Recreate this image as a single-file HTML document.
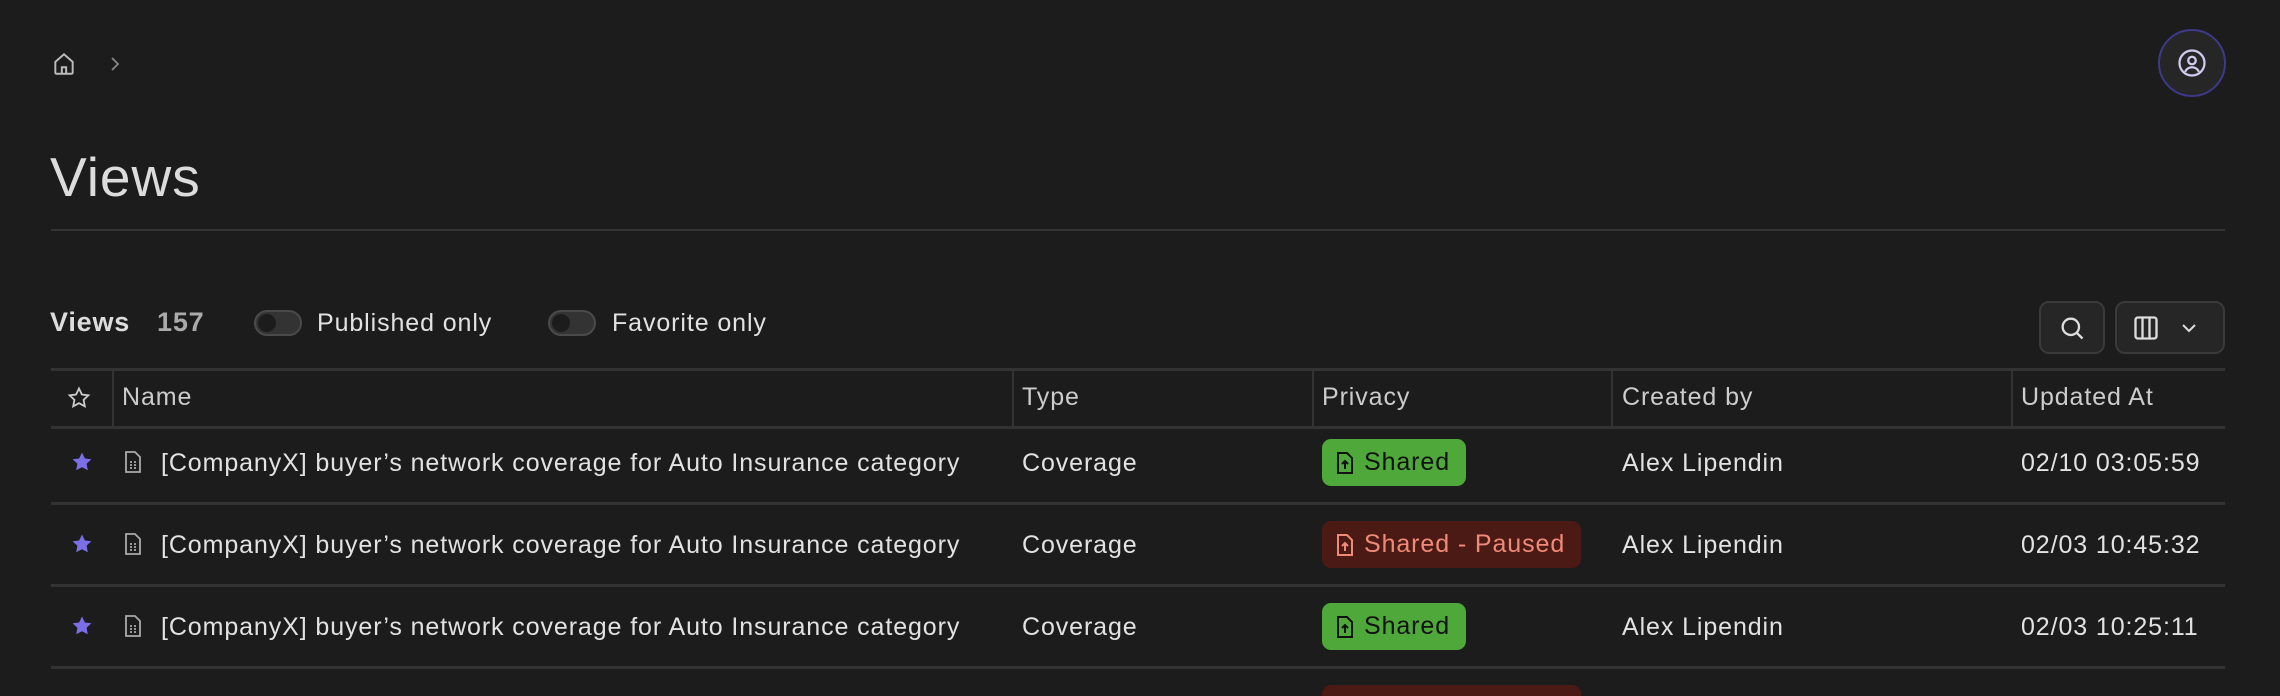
<!DOCTYPE html>
<html style="width:2280px;height:696px;overflow:hidden"><head><meta charset="utf-8"><style>
*{box-sizing:border-box;margin:0;padding:0}
body{width:2280px;height:696px;background:#1c1c1c;color:#e2e2e2;font-family:"Liberation Sans",sans-serif;position:relative;overflow:hidden}
.a{position:absolute}
.t{font-size:25px;white-space:nowrap;letter-spacing:0.9px}
.hl{position:absolute;height:3px;background:#333}
.vl{position:absolute;width:2px;background:#333;top:370px;height:57px}
.badge{position:absolute;height:47px;border-radius:9px;font-size:25px;letter-spacing:0.9px;display:flex;align-items:center;padding-left:14px;gap:10px;white-space:nowrap}
.g{background:#4ea83a;color:#111;width:144px}
.r{background:#4c1a14;color:#f08a78;width:259px}
.tog{position:absolute;width:48px;height:26px;border-radius:13px;background:#333;border:2px solid #4a4a4a}
.tog:after{content:"";position:absolute;left:2px;top:2px;width:18px;height:18px;border-radius:50%;background:#1c1c1c}
.btn{position:absolute;top:301px;height:53px;border:2px solid #3a3a3a;background:#262626;border-radius:10px}
</style></head><body>
<svg class="a" style="left:51px;top:51px" width="26" height="26" viewBox="0 0 24 24" fill="none" stroke="#bbb" stroke-width="1.8"><path d="M4 10l8-7 8 7v10a1 1 0 0 1-1 1H5a1 1 0 0 1-1-1z"/><path d="M10 21v-6h4v6"/></svg>
<svg class="a" style="left:107px;top:54px" width="16" height="20" viewBox="0 0 16 20" fill="none" stroke="#888" stroke-width="1.8"><path d="M5 4l6 6-6 6"/></svg>
<div class="a" style="left:2158px;top:29px;width:68px;height:68px;border-radius:50%;border:2px solid #3d3a8a;background:#262626"></div>
<svg class="a" style="left:2177px;top:48px" width="30" height="30" viewBox="0 0 24 24" fill="none" stroke="#d0ccf0" stroke-width="1.8"><circle cx="12" cy="12" r="10"/><circle cx="12" cy="10" r="3"/><path d="M6.5 19a6 6 0 0 1 11 0"/></svg>
<div class="a" style="left:50px;top:145px;font-size:55px;letter-spacing:1px;color:#dcdcdc">Views</div>
<div class="hl" style="left:51px;width:2174px;top:229px;height:2px"></div>
<div class="a" style="left:50px;top:307px;font-size:27px;letter-spacing:0.8px;font-weight:bold;color:#ddd">Views</div>
<div class="a" style="left:157px;top:307px;font-size:27px;letter-spacing:0.8px;font-weight:bold;color:#aaa">157</div>
<div class="tog" style="left:254px;top:310px"></div>
<div class="a t" style="left:317px;top:309px">Published only</div>
<div class="tog" style="left:548px;top:310px"></div>
<div class="a t" style="left:612px;top:309px">Favorite only</div>
<div class="btn" style="left:2039px;width:66px"></div>
<svg class="a" style="left:2058px;top:314px" width="28" height="28" viewBox="0 0 24 24" fill="none" stroke="#ddd" stroke-width="2"><circle cx="11" cy="11" r="7"/><path d="M16 16l5 5"/></svg>
<div class="btn" style="left:2115px;width:110px"></div>
<svg class="a" style="left:2132px;top:314px" width="28" height="28" viewBox="0 0 24 24" fill="none" stroke="#ddd" stroke-width="2"><rect x="3" y="3" width="18" height="18" rx="2"/><path d="M9 3v18M15 3v18"/></svg>
<svg class="a" style="left:2180px;top:320px" width="18" height="16" viewBox="0 0 18 16" fill="none" stroke="#ddd" stroke-width="2"><path d="M3 5l6 6 6-6"/></svg>
<div class="hl" style="left:51px;width:2174px;top:368px"></div>
<div class="hl" style="left:51px;width:2174px;top:426px"></div>
<div class="vl" style="left:112px"></div><div class="vl" style="left:1012px"></div><div class="vl" style="left:1312px"></div><div class="vl" style="left:1611px"></div><div class="vl" style="left:2011px"></div>
<svg class="a" style="left:67px;top:386px" width="24" height="24" viewBox="0 0 24 24" fill="none" stroke="#ccc" stroke-width="1.8"><path d="M12 2.5l2.9 6 6.5.8-4.8 4.5 1.2 6.5L12 17.2l-5.8 3.1 1.2-6.5-4.8-4.5 6.5-.8z"/></svg>
<div class="a t" style="left:122px;top:383px;color:#ccc">Name</div>
<div class="a t" style="left:1022px;top:383px;color:#ccc">Type</div>
<div class="a t" style="left:1322px;top:383px;color:#ccc">Privacy</div>
<div class="a t" style="left:1622px;top:383px;color:#ccc">Created by</div>
<div class="a t" style="left:2021px;top:383px;color:#ccc">Updated At</div>

<div class="hl" style="left:51px;width:2174px;top:502px"></div>
<div class="hl" style="left:51px;width:2174px;top:584px"></div>
<div class="hl" style="left:51px;width:2174px;top:666px"></div>

<svg class="a" style="left:70px;top:450px" width="24" height="24" viewBox="0 0 24 24" fill="#7b6ee6"><path d="M12 2.5l2.9 6 6.5.8-4.8 4.5 1.2 6.5L12 17.2l-5.8 3.1 1.2-6.5-4.8-4.5 6.5-.8z"/></svg>
<svg class="a" style="left:123px;top:450px" width="20" height="24" viewBox="0 0 20 24" fill="none" stroke="#aaa" stroke-width="1.8"><path d="M3 2h9l5 5v15H3z"/><path d="M7 12h2M11 12h2M7 15h2M11 15h2M7 18h2M11 18h2"/></svg>
<div class="a t" style="left:161px;top:449px">[CompanyX] buyer’s network coverage for Auto Insurance category</div>
<div class="a t" style="left:1022px;top:449px">Coverage</div>
<div class="badge g" style="left:1322px;top:439px"><svg width="18" height="24" viewBox="0 0 18 24" fill="none" stroke="#111" stroke-width="2"><path d="M2 2h9l5 5v15H2z"/><path d="M9 18v-8M6 13l3-3 3 3"/></svg>Shared</div>
<div class="a t" style="left:1622px;top:449px">Alex Lipendin</div>
<div class="a t" style="left:2021px;top:449px">02/10 03:05:59</div>

<svg class="a" style="left:70px;top:532px" width="24" height="24" viewBox="0 0 24 24" fill="#7b6ee6"><path d="M12 2.5l2.9 6 6.5.8-4.8 4.5 1.2 6.5L12 17.2l-5.8 3.1 1.2-6.5-4.8-4.5 6.5-.8z"/></svg>
<svg class="a" style="left:123px;top:532px" width="20" height="24" viewBox="0 0 20 24" fill="none" stroke="#aaa" stroke-width="1.8"><path d="M3 2h9l5 5v15H3z"/><path d="M7 12h2M11 12h2M7 15h2M11 15h2M7 18h2M11 18h2"/></svg>
<div class="a t" style="left:161px;top:531px">[CompanyX] buyer’s network coverage for Auto Insurance category</div>
<div class="a t" style="left:1022px;top:531px">Coverage</div>
<div class="badge r" style="left:1322px;top:521px"><svg width="18" height="24" viewBox="0 0 18 24" fill="none" stroke="#f08a78" stroke-width="2"><path d="M2 2h9l5 5v15H2z"/><path d="M9 18v-8M6 13l3-3 3 3"/></svg>Shared - Paused</div>
<div class="a t" style="left:1622px;top:531px">Alex Lipendin</div>
<div class="a t" style="left:2021px;top:531px">02/03 10:45:32</div>

<svg class="a" style="left:70px;top:614px" width="24" height="24" viewBox="0 0 24 24" fill="#7b6ee6"><path d="M12 2.5l2.9 6 6.5.8-4.8 4.5 1.2 6.5L12 17.2l-5.8 3.1 1.2-6.5-4.8-4.5 6.5-.8z"/></svg>
<svg class="a" style="left:123px;top:614px" width="20" height="24" viewBox="0 0 20 24" fill="none" stroke="#aaa" stroke-width="1.8"><path d="M3 2h9l5 5v15H3z"/><path d="M7 12h2M11 12h2M7 15h2M11 15h2M7 18h2M11 18h2"/></svg>
<div class="a t" style="left:161px;top:613px">[CompanyX] buyer’s network coverage for Auto Insurance category</div>
<div class="a t" style="left:1022px;top:613px">Coverage</div>
<div class="badge g" style="left:1322px;top:603px"><svg width="18" height="24" viewBox="0 0 18 24" fill="none" stroke="#111" stroke-width="2"><path d="M2 2h9l5 5v15H2z"/><path d="M9 18v-8M6 13l3-3 3 3"/></svg>Shared</div>
<div class="a t" style="left:1622px;top:613px">Alex Lipendin</div>
<div class="a t" style="left:2021px;top:613px">02/03 10:25:11</div>

<div class="a" style="left:1322px;top:685px;width:259px;height:11px;background:#4c1a14;border-radius:9px 9px 0 0"></div>
</body></html>
